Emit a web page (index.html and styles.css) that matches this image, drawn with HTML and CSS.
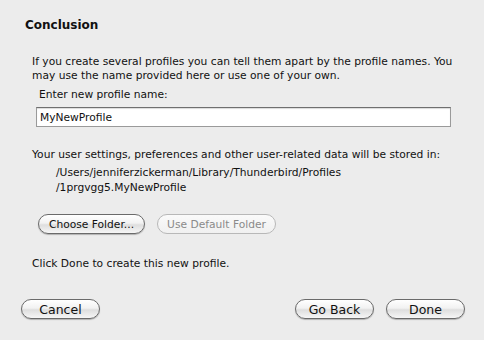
FILE: index.html
```html
<!DOCTYPE html>
<html lang="en">
<head>
  <meta charset="UTF-8" />
  <title>Create Profile - Conclusion</title>
  <link rel="stylesheet" href="styles.css">
</head>
<body>
  <div id="wizard">
    <h2 class="title">Conclusion</h2>

    <div class="page">
      <p class="intro">If you create several profiles you can tell them apart by the profile names. You may use the name provided here or use one of your own.</p>
      <label class="label" for="profileName">Enter new profile name:</label>
      <input class="field" id="profileName" type="text" value="MyNewProfile">

      <p class="store">Your user settings, preferences and other user-related data will be stored in:</p>
      <div class="path">/Users/jenniferzickerman/Library/Thunderbird/Profiles<br>/1prgvgg5.MyNewProfile</div>

      <div class="folder-row">
        <button class="btn choose">Choose Folder...</button>
        <button class="btn default" disabled>Use Default Folder</button>
      </div>

      <p class="finish">Click Done to create this new profile.</p>
    </div>

    <!-- wizard buttons -->
    <div class="footer">
      <button class="btn big cancel">Cancel</button>
      <div class="nav">
        <button class="btn big">Go Back</button>
        <button class="btn big">Done</button>
      </div>
    </div>
  </div>
</body>
</html>
```

FILE: styles.css
```css
body {
  margin: 0;
  background: #ececec;
  color: #111;
  font-family: "DejaVu Sans", "Liberation Sans", sans-serif;
  font-size: 10.7px;
}
#wizard {
  width: 484px;
  height: 340px;
  display: flex;
  flex-direction: column;
}
.title {
  margin: 17px 0 0 25px;
  font-size: 12px;
  font-weight: bold;
  line-height: 17px;
}
.page {
  padding: 0 0 0 32px;
  display: flex;
  flex-direction: column;
}
.intro {
  margin: 21px 0 0 0;
  width: 430px;
  line-height: 14px;
}
.label {
  margin: 5px 0 0 7px;
  line-height: 14px;
}
.field {
  margin: 5px 0 0 4px;
  width: 415px;
  height: 20px;
  box-sizing: border-box;
  border: 1px solid #9a9a9a;
  border-top-color: #6f6f6f;
  background: #fff;
  padding: 0 3px;
  font-family: inherit;
  font-size: 10.7px;
  color: #111;
  box-shadow: inset 0 1px 1px rgba(0, 0, 0, 0.15);
  outline: none;
}
.store {
  margin: 21px 0 0 0;
  line-height: 14px;
}
.path {
  margin: 3px 0 0 24px;
  line-height: 15px;
}
.folder-row {
  margin: 19px 0 0 6px;
  display: flex;
  gap: 12px;
}
.btn {
  height: 20px;
  padding: 0 8px;
  border: 1px solid #6a6a6a;
  border-radius: 10px;
  background: linear-gradient(#ffffff, #f2f2f2 45%, #dedede 55%, #f6f6f6);
  box-shadow: 0 1px 1px rgba(0, 0, 0, 0.25);
  font-family: inherit;
  font-size: 10.7px;
  color: #111;
}
.choose {
  width: 107px;
}
.default {
  width: 119px;
  color: #8a8a8a;
  border-color: #b8b8b8;
  box-shadow: none;
  background: linear-gradient(#fafafa, #f0f0f0);
}
.finish {
  margin: 23px 0 0 0;
  line-height: 14px;
}
.footer {
  margin: 28px 0 0 21px;
  width: 444px;
  display: flex;
  justify-content: space-between;
}
.nav {
  display: flex;
  gap: 12px;
}
.big {
  width: 79px;
  font-size: 12.5px;
}
```
